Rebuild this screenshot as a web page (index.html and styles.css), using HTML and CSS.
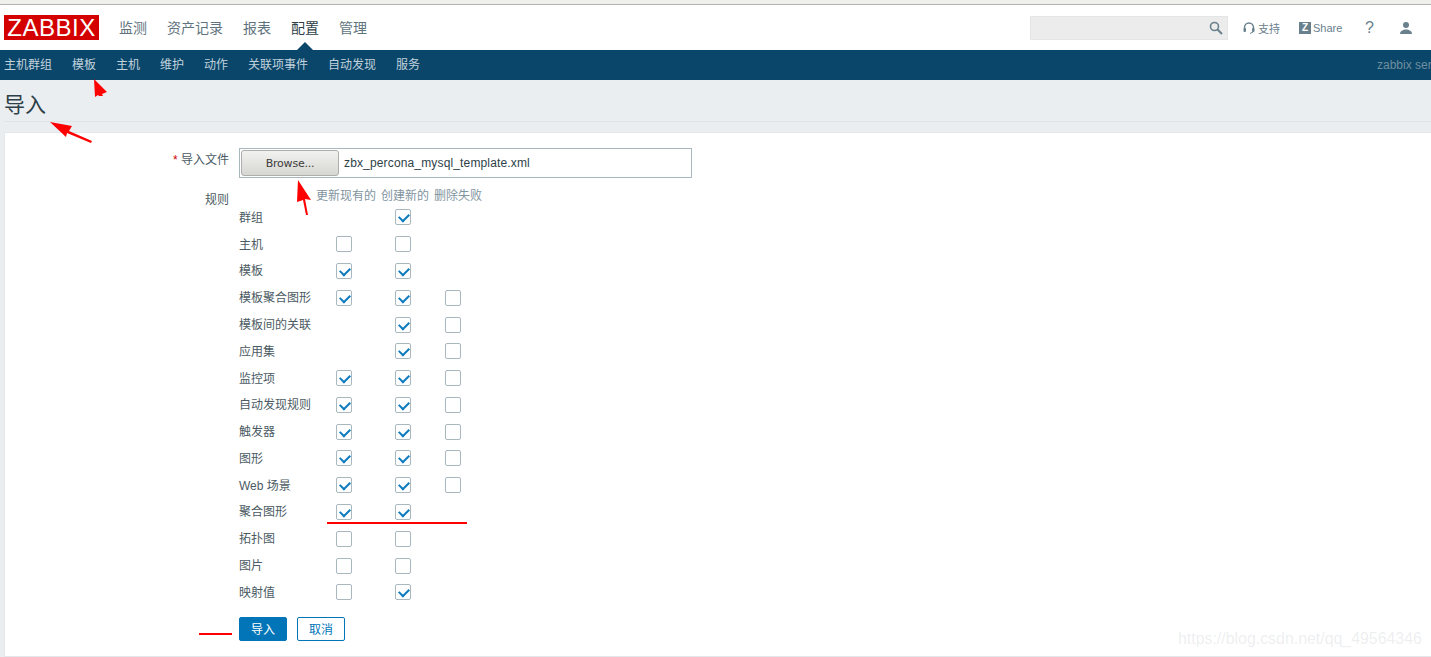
FILE: index.html
```html
<!DOCTYPE html>
<html lang="zh-CN">
<head>
<meta charset="utf-8">
<title>导入</title>
<link rel="stylesheet" href="styles.css">
</head>
<body>
<div class="chrome"></div>
<header class="topbar">
  <div class="logo">ZABBIX</div>
  <nav class="mainnav">
    <a>监测</a><a>资产记录</a><a>报表</a><a class="active">配置</a><a>管理</a>
  </nav>
  <div class="tools">
    <div class="search">
      <svg class="search-icon" width="14" height="14" viewBox="0 0 14 14"><circle cx="5.500" cy="5.500" r="4" fill="none" stroke="#69808d" stroke-width="1.600"/><path d="M8.500 8.500L13 13" stroke="#69808d" stroke-width="2"/></svg>
    </div>
    <a class="tool support">
      <svg width="12" height="12" viewBox="0 0 12 12"><path d="M1.500 7V5.500a4.500 4.500 0 0 1 9 0V7" fill="none" stroke="#69808d" stroke-width="1.400"/><rect x="0.500" y="6" width="2.500" height="4" rx="1" fill="#69808d"/><rect x="9" y="6" width="2.500" height="4" rx="1" fill="#69808d"/><path d="M10 10l-3 1.500" stroke="#69808d"/></svg>
      <span>支持</span>
    </a>
    <a class="tool share"><span class="zbox">Z</span><span>Share</span></a>
    <a class="tool help">?</a>
    <a class="tool user">
      <svg width="14" height="14" viewBox="0 0 14 14"><circle cx="7" cy="4" r="3" fill="#69808d"/><path d="M1 13c0-3 3-4.500 6-4.500s6 1.500 6 4.500z" fill="#69808d"/></svg>
    </a>
  </div>
</header>
<nav class="subnav">
  <a>主机群组</a><a>模板</a><a>主机</a><a>维护</a><a>动作</a><a>关联项事件</a><a>自动发现</a><a>服务</a>
  <span class="server">zabbix ser</span>
</nav>
<main class="page">
  <h1 class="title">导入</h1>
  <section class="card">
    <div class="form-row file-row">
      <label class="form-label"><span class="req">*</span> 导入文件</label>
      <div class="file-input"><button class="browse">Browse...</button><span class="filename">zbx_percona_mysql_template.xml</span></div>
    </div>
    <div class="form-row rules-row">
      <label class="form-label rules-label">规则</label>
      <div class="rules">
        <div class="rules-head"><span>更新现有的</span><span>创建新的</span><span>删除失败</span></div>
        <div class="rule"><span class="rule-name">群组</span><i class="cell"></i><i class="cell"><b class="cb on"></b></i><i class="cell"></i></div>
        <div class="rule"><span class="rule-name">主机</span><i class="cell"><b class="cb"></b></i><i class="cell"><b class="cb"></b></i><i class="cell"></i></div>
        <div class="rule"><span class="rule-name">模板</span><i class="cell"><b class="cb on"></b></i><i class="cell"><b class="cb on"></b></i><i class="cell"></i></div>
        <div class="rule"><span class="rule-name">模板聚合图形</span><i class="cell"><b class="cb on"></b></i><i class="cell"><b class="cb on"></b></i><i class="cell"><b class="cb"></b></i></div>
        <div class="rule"><span class="rule-name">模板间的关联</span><i class="cell"></i><i class="cell"><b class="cb on"></b></i><i class="cell"><b class="cb"></b></i></div>
        <div class="rule"><span class="rule-name">应用集</span><i class="cell"></i><i class="cell"><b class="cb on"></b></i><i class="cell"><b class="cb"></b></i></div>
        <div class="rule"><span class="rule-name">监控项</span><i class="cell"><b class="cb on"></b></i><i class="cell"><b class="cb on"></b></i><i class="cell"><b class="cb"></b></i></div>
        <div class="rule"><span class="rule-name">自动发现规则</span><i class="cell"><b class="cb on"></b></i><i class="cell"><b class="cb on"></b></i><i class="cell"><b class="cb"></b></i></div>
        <div class="rule"><span class="rule-name">触发器</span><i class="cell"><b class="cb on"></b></i><i class="cell"><b class="cb on"></b></i><i class="cell"><b class="cb"></b></i></div>
        <div class="rule"><span class="rule-name">图形</span><i class="cell"><b class="cb on"></b></i><i class="cell"><b class="cb on"></b></i><i class="cell"><b class="cb"></b></i></div>
        <div class="rule"><span class="rule-name">Web 场景</span><i class="cell"><b class="cb on"></b></i><i class="cell"><b class="cb on"></b></i><i class="cell"><b class="cb"></b></i></div>
        <div class="rule"><span class="rule-name">聚合图形</span><i class="cell"><b class="cb on"></b></i><i class="cell"><b class="cb on"></b></i><i class="cell"></i></div>
        <div class="rule"><span class="rule-name">拓扑图</span><i class="cell"><b class="cb"></b></i><i class="cell"><b class="cb"></b></i><i class="cell"></i></div>
        <div class="rule"><span class="rule-name">图片</span><i class="cell"><b class="cb"></b></i><i class="cell"><b class="cb"></b></i><i class="cell"></i></div>
        <div class="rule"><span class="rule-name">映射值</span><i class="cell"><b class="cb"></b></i><i class="cell"><b class="cb on"></b></i><i class="cell"></i></div>
        <div class="actions"><button class="btn primary">导入</button><button class="btn ghost">取消</button></div>
      </div>
    </div>
  </section>
</main>
<div class="watermark">https://blog.csdn.net/qq_49564346</div>
<svg class="marks" width="1431" height="657" viewBox="0 0 1431 657">
  <g fill="#f00" stroke="none">
    <path d="M94 79L107 92L102 94L103 96L99 96L98 95L95 97z"/>
    <path d="M50 122L72 126L69 131L92 141L91 143L67 133L66 137z"/>
    <path d="M298 180L311 200L305 199L308 215L306 215L303 200L297 202z"/>
    <path d="M327 522H467V524H327zM199 633H232V635H199z"/>
  </g>
</svg>
</body>
</html>
```
FILE: styles.css
```css
* { box-sizing: border-box; }
html, body { margin: 0; padding: 0; }
body {
  width: 1431px;
  height: 657px;
  overflow: hidden;
  position: relative;
  background: #ebeef0;
  font-family: "Liberation Sans", "Noto Sans CJK SC", Arial, sans-serif;
  font-size: 12px;
  color: #4b5a63;
}
.chrome { height: 5px; background: #efefec; border-bottom: 1px solid #b4b4b0; }
.topbar {
  height: 45px;
  background: #fff;
  display: flex;
  align-items: flex-start;
}
.logo {
  margin: 10px 0 0 4px;
  width: 95px;
  height: 25px;
  background: #d40000;
  color: #fff;
  font-size: 24px;
  line-height: 25px;
  text-align: center;
  letter-spacing: 0.5px;
}
.mainnav { display: flex; margin-left: 20px; gap: 20px; height: 45px; }
.mainnav a {
  position: relative;
  font-size: 14px;
  line-height: 46px;
  color: #5f737e;
}
.mainnav a.active { color: #2e3f48; }
.mainnav a.active::after {
  content: "";
  position: absolute;
  left: 6px;
  bottom: 0;
  border: 8px solid transparent;
  border-top: 0;
  border-bottom-color: #0a466a;
}
.tools { margin-left: auto; display: flex; align-items: center; height: 45px; }
.search {
  width: 198px;
  height: 24px;
  margin-top: 1px;
  background: #ececec;
  border: 1px solid #e3e5e6;
  position: relative;
}
.search-icon { position: absolute; right: 4px; top: 4px; }
.tool { display: flex; align-items: center; color: #69808d; font-size: 11px; }
.support { margin-left: 15px; gap: 3px; width: 56px; }
.share { gap: 2px; width: 66px; }
.zbox {
  width: 12px;
  height: 12px;
  background: #69808d;
  color: #fff;
  font-size: 10px;
  font-weight: bold;
  line-height: 12px;
  text-align: center;
}
.help { font-size: 16px; width: 34px; }
.user { width: 27px; margin-right: 5px; }
.subnav {
  height: 30px;
  background: #0a466a;
  display: flex;
  gap: 20px;
  padding-left: 4px;
  line-height: 30px;
  position: relative;
  overflow: hidden;
}
.subnav a { color: #c1d2dc; }
.server { position: absolute; left: 1377px; color: #6e8e9f; white-space: nowrap; }
.page { padding: 0 0 0 4px; }
.title {
  margin: 0;
  height: 42px;
  font-size: 21px;
  font-weight: normal;
  line-height: 49px;
  color: #2e3f48;
  border-bottom: 1px solid #e0e4e6;
}
.card {
  margin-top: 10px;
  height: 525px;
  background: #fff;
  border: 1px solid #e4e7e9;
  border-right: 0;
  padding-top: 15px;
}
.form-row { display: flex; }
.form-label {
  width: 224px;
  text-align: right;
  color: #4b5a63;
  flex: none;
}
.req { color: #d40000; }
.file-row .form-label { line-height: 24px; }
.file-input {
  margin-left: 10px;
  width: 453px;
  height: 30px;
  border: 1px solid #a9b7bf;
  display: flex;
  align-items: center;
  padding-left: 1px;
}
.browse {
  width: 98px;
  height: 26px;
  padding: 0;
  border: 1px solid #adadad;
  border-radius: 3px;
  background: linear-gradient(#f2f2f0, #d6d6d2);
  color: #3c3c3c;
  font: 11px "DejaVu Sans", sans-serif;
  letter-spacing: -0.2px;
}
.filename { margin-left: 5px; color: #2e3f48; font-size: 12px; letter-spacing: 0.15px; }
.rules-row { margin-top: 9px; }
.rules-label { line-height: 24px; padding-top: 1px; }
.rules { margin-left: 10px; }
.rules-head {
  display: flex;
  height: 16px;
  padding-left: 77px;
  gap: 5px;
  color: #7f949f;
  line-height: 19px;
}
.rule { display: flex; align-items: center; height: 26.79px; }
.rule-name { width: 97px; color: #4b5a63; }
.cell { display: flex; width: 59px; height: 16px; font-style: normal; }
.cell + .cell { width: 50px; }
.cb {
  display: block;
  flex: none;
  width: 16px;
  height: 16px;
  margin: 1px 0 -1px;
  border: 1px solid #a9b7bf;
  border-radius: 2px;
  background: #fff;
  position: relative;
}
.cb.on::after {
  content: "";
  position: absolute;
  left: 3px;
  top: 3px;
  width: 8px;
  height: 5px;
  border-left: 2.5px solid #0d7bbd;
  border-bottom: 2.5px solid #0d7bbd;
  transform: rotate(-45deg);
}
.actions { display: flex; gap: 10px; margin-top: 12px; }
.btn {
  width: 48px;
  height: 24px;
  padding: 0;
  border-radius: 2px;
  font: 12px "Liberation Sans", "Noto Sans CJK SC", sans-serif;
}
.primary { background: #0275b8; border: 1px solid #0275b8; color: #fff; }
.ghost { background: #fff; border: 1px solid #0275b8; color: #0275b8; }
.watermark {
  position: absolute;
  left: 1178px;
  top: 630px;
  font-size: 15.9px;
  color: rgba(160, 170, 175, 0.2);
  white-space: nowrap;
}
.marks { position: absolute; left: 0; top: 0; pointer-events: none; }
```
